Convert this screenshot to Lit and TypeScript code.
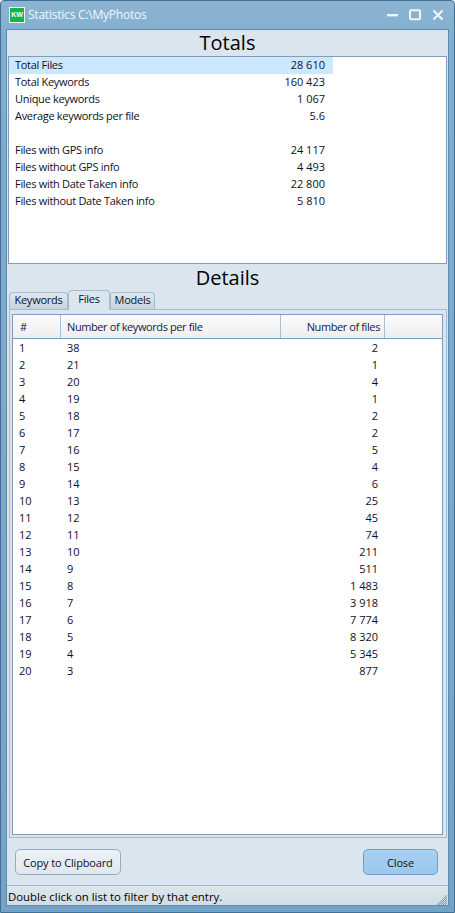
import { LitElement, html, css, svg } from "lit";
import { customElement } from "lit/decorators.js";

const totals: [string, string][] = [
  ["Total Files", "28 610"],
  ["Total Keywords", "160 423"],
  ["Unique keywords", "1 067"],
  ["Average keywords per file", "5.6"],
  ["", ""],
  ["Files with GPS info", "24 117"],
  ["Files without GPS info", "4 493"],
  ["Files with Date Taken info", "22 800"],
  ["Files without Date Taken info", "5 810"],
];
const rows: [number, number, string][] = [
  [1, 38, "2"], [2, 21, "1"], [3, 20, "4"], [4, 19, "1"], [5, 18, "2"],
  [6, 17, "2"], [7, 16, "5"], [8, 15, "4"], [9, 14, "6"], [10, 13, "25"],
  [11, 12, "45"], [12, 11, "74"], [13, 10, "211"], [14, 9, "511"], [15, 8, "1 483"],
  [16, 7, "3 918"], [17, 6, "7 774"], [18, 5, "8 320"], [19, 4, "5 345"], [20, 3, "877"],
];

@customElement("app-root")
export class AppRoot extends LitElement {
  static styles = css`
    :host {
      display: block;
      width: 455px;
      height: 913px;
      font-family: "Open Sans", "Noto Sans", sans-serif;
      font-size: 11px;
      color: #10101c;
      overflow: hidden;
    }
    .frame {
      box-sizing: border-box;
      width: 455px;
      height: 913px;
      background: linear-gradient(180deg, #8db4d2 0, #80aecd 40px, #74a3c6 100%);
      border: 1px solid #3f6f95;
      border-radius: 4px 4px 0 0;
      display: flex;
      flex-direction: column;
      padding: 0 5px 6px 5px;
    }
    .titlebar {
      height: 27px;
      flex: none;
      display: flex;
      align-items: center;
      color: #f2f7fb;
      font-size: 12px;
      letter-spacing: -0.22px;
      padding: 0 0 1px 3px;
    }
    .logo {
      width: 16px;
      height: 16px;
      background: #16b34a;
      border: 1px solid #f0f8f2;
      box-sizing: border-box;
      color: #fff;
      font-size: 7px;
      font-weight: 800;
      line-height: 14px;
      letter-spacing: 0;
      text-align: center;
      margin-right: 3px;
      font-family: "Liberation Sans", sans-serif;
    }
    .title { flex: 1; }
    .ctrls { display: flex; gap: 11px; margin-right: 5px; align-items: center; }
    .ctrls svg { display: block; }
    .client {
      flex: 1;
      min-height: 0;
      background: #dbe5ee;
      border: 1px solid #5f8bb0;
      display: flex;
      flex-direction: column;
    }
    h1 {
      margin: 0;
      font-weight: 400;
      font-size: 20px;
      line-height: 26px;
      height: 26px;
      text-align: center;
      color: #000;
    }
    .listbox {
      height: 208px;
      flex: none;
      box-sizing: border-box;
      margin: 0 1px;
      background: #fff;
      border: 1px solid #7f9db9;
    }
    .trow {
      display: flex;
      justify-content: space-between;
      width: 310px;
      height: 17px;
      line-height: 15px;
      padding: 0 8px 0 6px;
    }
    .trow span:first-child { letter-spacing: -0.3px; }
    .trow.sel { background: #cce8ff; }
    .details { height: 27px; line-height: 27px; }
    .tabs {
      display: flex;
      height: 18px;
      padding-left: 2px;
      align-items: flex-end;
      flex: none;
      position: relative;
      z-index: 1;
      letter-spacing: -0.24px;
    }
    .tab {
      box-sizing: border-box;
      height: 17px;
      line-height: 14px;
      border: 1px solid #a5bccf;
      border-bottom: none;
      border-radius: 4px 4px 0 0;
      background: linear-gradient(180deg, #dfe8ef, #c4d3de);
      text-align: center;
    }
    .tab.kw { width: 59px; }
    .tab.mod { width: 45px; }
    .tab.active {
      width: 42px;
      height: 20px;
      line-height: 16px;
      background: #dbe5ee;
      margin-bottom: -1px;
    }
    .pane {
      flex: none;
      height: 529px;
      box-sizing: border-box;
      margin: 0 1px 0 2px;
      border: 1px solid #a5bccf;
      padding: 4px 3px 2px 2px;
    }
    .table {
      height: 100%;
      box-sizing: border-box;
      background: #fff;
      border: 1px solid #7f9db9;
    }
    .thead {
      display: grid;
      grid-template-columns: 48px 220px 104px 1fr;
      height: 24px;
      box-sizing: border-box;
      border-bottom: 1px solid #7f9db9;
      background: linear-gradient(180deg, #fbfbfb, #eeeeee);
      line-height: 23px;
      color: #14204a;
      letter-spacing: -0.4px;
    }
    .thead div { border-right: 1px solid #a9bfd3; padding: 0 6px; }
    .thead div:first-child { padding-left: 7px; }
    .thead div:nth-child(3) { text-align: right; padding-right: 4px; }
    .thead div:last-child { border-right: none; }
    .tbody { padding-top: 1px; }
    .drow {
      display: grid;
      grid-template-columns: 48px 220px 97px;
      height: 17px;
      line-height: 15px;
    }
    .drow div { padding-left: 6px; }
    .drow div:last-child { text-align: right; padding: 0; }
    .buttons {
      flex: 1;
      display: flex;
      justify-content: space-between;
      align-items: center;
      padding: 0 10px 0 8px;
    }
    button {
      font: inherit;
      color: #10101c;
      height: 26px;
      border-radius: 5px;
      padding: 2px 0 0 0;
      box-sizing: border-box;
      letter-spacing: -0.15px;
    }
    .copy {
      width: 106px;
      border: 1px solid #93acc4;
      background: linear-gradient(180deg, #edf2f7, #dfe7ef);
    }
    .close {
      width: 75px;
      border: 1px solid #6d9fcb;
      background: linear-gradient(180deg, #a9d0f0, #9bc7ec);
    }
    .status {
      flex: none;
      height: 20px;
      box-sizing: border-box;
      border-top: 1px solid #98b9d6;
      background: linear-gradient(180deg, #dde6ee, #d0dde6);
      font-size: 11.4px;
      padding-left: 1px;
      display: flex;
      justify-content: space-between;
      align-items: flex-end;
      color: #000;
    }
    .status span { line-height: 16px; }
    .grip { display: block; margin: 0 1px 0 0; }
  `;

  render() {
    return html`
      <div class="frame">
        <div class="titlebar">
          <div class="logo">KW</div>
          <div class="title">Statistics C:\\MyPhotos</div>
          <div class="ctrls">
            <svg width="12" height="12" viewBox="0 0 12 12"><rect x="1" y="5" width="11" height="2.4" fill="#eef4f8"/></svg>
            <svg width="12" height="12" viewBox="0 0 12 12"><rect x="1" y="1.2" width="10" height="9" rx="1" fill="none" stroke="#eef4f8" stroke-width="2"/></svg>
            <svg width="12" height="12" viewBox="0 0 12 12"><path d="M1.5 1.5 L10.5 10.5 M10.5 1.5 L1.5 10.5" fill="none" stroke="#eef4f8" stroke-width="2.2"/></svg>
          </div>
        </div>
        <div class="client">
          <h1>Totals</h1>
          <div class="listbox">
            ${totals.map(
              ([k, v], i) => html`<div class="trow ${i === 0 ? "sel" : ""}"><span>${k}</span><span>${v}</span></div>`
            )}
          </div>
          <h1 class="details">Details</h1>
          <div class="tabs">
            <div class="tab kw">Keywords</div>
            <div class="tab active">Files</div>
            <div class="tab mod">Models</div>
          </div>
          <div class="pane">
            <div class="table">
              <div class="thead">
                <div>#</div>
                <div>Number of keywords per file</div>
                <div>Number of files</div>
                <div></div>
              </div>
              <div class="tbody">
                ${rows.map(
                  ([a, b, c]) => html`<div class="drow"><div>${a}</div><div>${b}</div><div>${c}</div></div>`
                )}
              </div>
            </div>
          </div>
          <div class="buttons">
            <button class="copy">Copy to Clipboard</button>
            <button class="close">Close</button>
          </div>
          <div class="status">
            <span>Double click on list to filter by that entry.</span>
            <svg class="grip" width="12" height="12" viewBox="0 0 12 12">
              ${[2, 4, 6, 8, 10].map(
                (n) => svg`<line x1="${n}" y1="12" x2="12" y2="${n}" stroke="#8499aa" stroke-width="1"/>`
              )}
            </svg>
          </div>
        </div>
      </div>
    `;
  }
}
